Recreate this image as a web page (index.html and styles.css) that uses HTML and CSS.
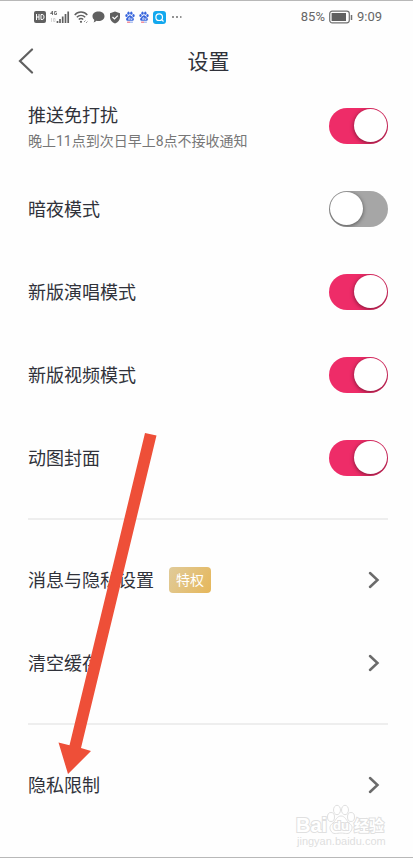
FILE: index.html
```html
<!DOCTYPE html>
<html lang="zh-CN">
<head>
<meta charset="utf-8">
<meta name="viewport" content="width=device-width, initial-scale=1">
<title>设置</title>
<link rel="stylesheet" href="styles.css">
</head>
<body>
<svg class="defs" width="0" height="0" aria-hidden="true">
  <symbol id="paw" viewBox="0 0 12 14">
    <g fill="#3765dc">
      <ellipse cx="1.8" cy="5.2" rx="1.4" ry="1.9"/>
      <ellipse cx="4.2" cy="2.4" rx="1.4" ry="1.9"/>
      <ellipse cx="7.6" cy="2.4" rx="1.4" ry="1.9"/>
      <ellipse cx="10.2" cy="5.3" rx="1.4" ry="1.9"/>
      <path d="M6 4.8c1.4 0 2 1.4 3.1 2.4 1.1 1 1.9 1.700 1.500 3-.4 1.300-1.600 1.300-4.600 1.300s-4.200 0-4.600-1.300c-.4-1.300.4-2 1.500-3C4 6.200 4.600 4.800 6 4.800z"/>
    </g>
    <path d="M4.300 8v2h1.200V7M7 8v2h1.400V8" fill="none" stroke="#fff" stroke-width=".7"/>
    <path d="M2.500 13.200h3.500" stroke="#e8566c" stroke-width="1.200"/>
    <path d="M6 13.200h3.500" stroke="#8aa5ea" stroke-width="1.200"/>
  </symbol>
  <symbol id="chevron" viewBox="0 0 12 18">
    <path d="M2 2l7.500 7L2 16" fill="none" stroke="#6b6b6b" stroke-width="2.500" stroke-linecap="round"/>
  </symbol>
</svg>
<div class="screen">
  <div class="status">
    <div class="status-icons">
      <svg width="12" height="12" viewBox="0 0 12 12"><rect width="12" height="12" rx="2" fill="#606060"/><path d="M2.500 3v6M5 3v6M2.500 6H5M7 3.500v5h1c1.500 0 2-1 2-2.500s-.5-2.500-2-2.500z" fill="none" stroke="#fff"/></svg>
      <svg width="20" height="14" viewBox="0 0 20 14"><path d="M2.500 5V1L.5 3.500h2.700M6.500 1.500H4.600v3h1.900V3H5.800" fill="none" stroke="#666" stroke-width=".9"/><path d="M1.500 8v4M3.500 8.500h1.500v3H3.500z" fill="none" stroke="#ccc" stroke-width=".8"/><path d="M7.500 13v-2M10 13V9M12.700 13V6.500M15.500 13V4M18.200 13V1.500" stroke="#606060" stroke-width="1.700"/></svg>
      <svg width="14" height="14" viewBox="0 0 14 14"><g fill="none" stroke="#606060" stroke-width="1.400"><path d="M.7 5C4 1 10 1 13.300 5M2.800 7.300c2.400-2.600 6-2.600 8.400 0M4.800 9.600c1.300-1.400 3.100-1.400 4.400 0"/></g><circle cx="7" cy="11.800" r="1.100" fill="#606060"/><path d="M10 12l1.500-1.500M12 13l1.500-1.500" stroke="#888" stroke-width=".9" fill="none"/></svg>
      <svg width="13" height="12" viewBox="0 0 13 12"><path d="M6.500.5c3.500 0 6 2 6 4.700 0 2.800-2.500 4.800-6 4.800-.7 0-1.300-.1-2-.2-.8.9-1.800 1.400-3 1.600.6-.8.8-1.500.7-2.600C1 7.900.5 6.700.5 5.200.5 2.500 3 .5 6.500.5z" fill="#606060"/></svg>
      <svg width="12" height="13" viewBox="0 0 12 13"><path d="M6 .5l5 1.800v4c0 3-2 5-5 6.200-3-1.200-5-3.200-5-6.200v-4z" fill="#606060"/><path d="M3.500 6l2 2 3.300-3.300" fill="none" stroke="#fff" stroke-width="1.200"/></svg>
      <svg width="10" height="12"><use href="#paw"/></svg>
      <svg width="10" height="12"><use href="#paw"/></svg>
      <svg width="13" height="13" viewBox="0 0 13 13"><rect width="13" height="13" rx="3" fill="#13a8ee"/><circle cx="6.200" cy="6.200" r="3.300" fill="none" stroke="#fff" stroke-width="1.200"/><path d="M8.700 8.700l1.800 1.800" stroke="#fff" stroke-width="1.200"/></svg>
      <svg width="12" height="2" viewBox="0 0 12 2"><path d="M2 1h2M6 1h2M10 1h1.500" stroke="#707070" stroke-width="1.500"/></svg>
    </div>
    <div class="status-info">
      <span>85%</span>
      <svg width="24" height="14" viewBox="0 0 24 14"><rect x=".7" y="1.200" width="19.600" height="11.600" rx="2.500" fill="none" stroke="#707070" stroke-width="1.200"/><rect x="2.600" y="3" width="14.400" height="8" fill="#606060"/><path d="M22.500 5v5" stroke="#707070" stroke-width="1.500"/></svg>
      <span>9:09</span>
    </div>
  </div>
  <header class="header">
    <button class="back" type="button" aria-label="返回"><svg width="16" height="26" viewBox="0 0 16 26"><path d="M14 1.500L2 13l12 11.500" fill="none" stroke="#606060" stroke-width="2.200" stroke-linecap="round"/></svg></button>
    <h1>设置</h1>
  </header>
  <main>
    <section>
      <div class="row"><label for="dnd"><span class="name">推送免打扰</span><span class="note">晚上11点到次日早上8点不接收通知</span></label><input id="dnd" type="checkbox" role="switch" checked></div>
      <div class="row"><label for="dark">暗夜模式</label><input id="dark" type="checkbox" role="switch"></div>
      <div class="row"><label for="sing">新版演唱模式</label><input id="sing" type="checkbox" role="switch" checked></div>
      <div class="row"><label for="video">新版视频模式</label><input id="video" type="checkbox" role="switch" checked></div>
      <div class="row"><label for="cover">动图封面</label><input id="cover" type="checkbox" role="switch" checked></div>
    </section>
    <section>
      <a class="row" href="#messages"><span class="entry"><span class="text">消息与隐私设置</span><span class="badge">特权</span></span><svg class="chevron" width="12" height="18"><use href="#chevron"/></svg></a>
      <a class="row" href="#cache"><span class="text">清空缓存</span><svg class="chevron" width="12" height="18"><use href="#chevron"/></svg></a>
    </section>
    <section>
      <a class="row" href="#privacy"><span class="text">隐私限制</span><svg class="chevron" width="12" height="18"><use href="#chevron"/></svg></a>
    </section>
  </main>
  <svg class="pointer" width="100" height="342" viewBox="0 0 100 342" aria-hidden="true"><path d="M88 0L99.500 2.500 24 315l10 3L11 341 1.500 309.500l11 2.800z" fill="#ee4f38"/></svg>
  <svg class="watermark" width="92" height="46" viewBox="0 0 92 46">
    <g fill="#fff" stroke="#e0e0e0">
      <text class="mark" x="1" y="30">Bai</text>
      <ellipse cx="36" cy="15" rx="3.500" ry="4.500"/>
      <ellipse cx="42" cy="8" rx="3.500" ry="4.700"/>
      <ellipse cx="50" cy="8" rx="3.500" ry="4.700"/>
      <ellipse cx="56" cy="15" rx="3.500" ry="4.500"/>
      <path d="M46 14c4 0 5 4 8 7 3 2 4 5 2 8-2 4-6 2-10 2s-8 2-10-2c-2-3-1-6 2-8 3-3 4-7 8-7z"/>
      <text class="du" x="38" y="28">du</text>
      <text class="cjk" x="59" y="29">经验</text>
    </g>
    <text class="url" x="2" y="43">jingyan.baidu.com</text>
  </svg>
</div>
</body>
</html>
```
FILE: styles.css
```css
* {
  box-sizing: border-box;
}

body {
  margin: 0;
  background: #fefefe;
  color: #30323a;
  font-family: Roboto, "Noto Sans CJK SC", sans-serif;
  font-size: 18px;
  line-height: 26px;
}

svg {
  display: block;
  flex: none;
}

.defs {
  position: absolute;
}

.screen {
  position: relative;
  min-height: 100vh;
  border-top: 1px solid #b8b8b8;
  border-bottom: 1px solid #b8b8b8;
}

.status {
  display: flex;
  justify-content: space-between;
  align-items: center;
  height: 32px;
  padding: 0 31px 0 34px;
  color: #666;
  font-size: 13px;
}

.status-icons,
.status-info {
  display: flex;
  align-items: center;
  gap: 4px;
}

.header {
  display: grid;
  grid-template-columns: 48px 1fr 48px;
  align-items: center;
  height: 51px;
  padding-top: 4px;
}

.header h1 {
  grid-column: 2;
  margin: 0;
  padding: 2px 0 0 4px;
  text-align: center;
  font-size: 21px;
  font-weight: 400;
}

.back {
  padding: 0 0 0 18px;
  border: 0;
  background: none;
}

section {
  margin: 0 25px 0 28px;
  padding: 18px 0 19px;
  border-bottom: 2px solid #eee;
}

section:first-child {
  padding-top: 0;
}

section:last-child {
  border-bottom: 0;
}

.row {
  display: flex;
  justify-content: space-between;
  align-items: center;
  min-height: 83px;
  color: inherit;
  text-decoration: none;
}

label,
.text {
  padding-top: 2px;
}

.name,
.note {
  display: block;
}

.note {
  margin-top: 2px;
  color: #777;
  font-size: 14px;
  line-height: 20px;
}

input {
  appearance: none;
  flex: none;
  width: 59px;
  height: 36px;
  margin: 0;
  padding: 1px;
  border-radius: 18px;
  background: #a6a6a6;
  overflow: hidden;
}

input::before {
  content: "";
  display: block;
  width: 33px;
  height: 33px;
  border-radius: 50%;
  background: #fff;
  box-shadow: 0 1px 4px rgba(0, 0, 0, 0.5);
}

input:checked {
  background: #ee2c68;
}

input:checked::before {
  margin-left: auto;
}

.entry {
  display: flex;
  align-items: center;
  gap: 15px;
}

.badge {
  padding: 0 7px;
  border-radius: 4px;
  background: linear-gradient(120deg, #e0cb9a, #e6b75a);
  color: #fff;
  font-size: 14px;
}

.chevron {
  margin-right: 8px;
}

.pointer {
  position: absolute;
  left: 57px;
  top: 432px;
  pointer-events: none;
}

.watermark {
  position: absolute;
  right: 26px;
  bottom: 9px;
  pointer-events: none;
}

.mark {
  font: 700 20px "Liberation Sans", sans-serif;
}

.du {
  font: 700 13px "Liberation Sans", sans-serif;
}

.cjk {
  font: 700 15px "Noto Sans CJK SC", sans-serif;
}

.mark,
.du,
.cjk {
  paint-order: stroke;
  stroke-width: 2px;
}

.url {
  fill: #dedede;
  font: 11px "Liberation Sans", sans-serif;
}
```
